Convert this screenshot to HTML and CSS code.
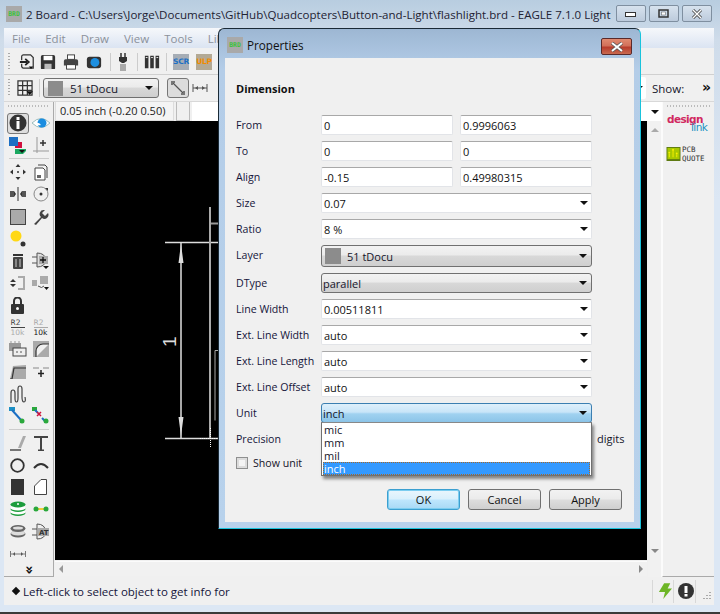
FILE: index.html
```html
<!DOCTYPE html>
<html lang="en">
<head>
<meta charset="utf-8">
<title>EAGLE Properties</title>
<link rel="stylesheet" href="styles.css">
</head>
<body>
<div class="desktop">
  <div class="win">
    <div class="titlebar">
      <span class="brd">BRD</span>
      <span class="title-text">2 Board - C:\Users\Jorge\Documents\GitHub\Quadcopters\Button-and-Light\flashlight.brd - EAGLE 7.1.0 Light</span>
      <div class="caps">
        <span class="cap"><svg width="12" height="8" viewBox="0 0 12 8"><rect x="0.5" y="2.5" width="10" height="4" fill="#fff" stroke="#333"/></svg></span>
        <span class="cap"><svg width="12" height="10" viewBox="0 0 12 10"><rect x="1" y="1" width="9" height="7" fill="none" stroke="#333" stroke-width="1.5"/><rect x="3.5" y="3" width="4" height="3" fill="#fff" stroke="#555" stroke-width=".5"/></svg></span>
        <span class="cap"><svg width="12" height="10" viewBox="0 0 12 10"><path d="M2 1l8 8M10 1l-8 8" stroke="#444" stroke-width="3"/><path d="M2 1l8 8M10 1l-8 8" stroke="#fff" stroke-width="1.4"/></svg></span>
      </div>
    </div>
    <div class="body">
      <div class="menubar">
        <span>File</span><span>Edit</span><span>Draw</span><span>View</span><span>Tools</span><span>Library</span>
      </div>
      <div class="toolbar tb1">
        <i class="grip"></i>
        <svg class="ti" width="16" height="16" viewBox="0 0 18 18"><path d="M5 1h8l3 3v12H5a3 3 0 0 1-2-2v-3M3 7V3a2 2 0 0 1 2-2" fill="none" stroke="#333" stroke-width="1.4"/><path d="M1 9h8M7 5.500l4 3.500-4 3.500" fill="none" stroke="#222" stroke-width="2"/><path d="M11 14h5l-2.500 3z" fill="#111"/></svg>
        <svg class="ti" width="16" height="16" viewBox="0 0 18 18"><path d="M1 3a2 2 0 0 1 2-2h12a2 2 0 0 1 2 2v13a1 1 0 0 1-1 1H2a1 1 0 0 1-1-1z" fill="#333"/><rect x="4" y="2" width="10" height="5" fill="#fff"/><rect x="5" y="11" width="8" height="6" fill="#bbb"/></svg>
        <svg class="ti" width="16" height="16" viewBox="0 0 18 18"><rect x="5" y="1" width="8" height="5" fill="#fff" stroke="#333"/><path d="M1 8a2 2 0 0 1 2-2h12a2 2 0 0 1 2 2v5H1z" fill="#444"/><rect x="4" y="12" width="10" height="5" fill="#fff" stroke="#333"/></svg>
        <svg class="ti" width="16" height="16" viewBox="0 0 18 18"><rect x="1" y="3" width="16" height="13" rx="3" fill="#333"/><circle cx="10" cy="9.500" r="5" fill="#1d8fe0"/></svg>
        <i class="sep s1"></i>
        <svg class="ti plug" width="10" height="18" viewBox="0 0 10 18"><path d="M3 0v4M7 0v4" stroke="#333" stroke-width="1.500"/><path d="M1 4h8v4l-3 2H4L1 8z" fill="#333"/><rect x="2" y="11" width="6" height="7" fill="#aaa"/></svg>
        <i class="sep s2"></i>
        <svg class="ti bars" width="16" height="16" viewBox="0 0 18 16"><path d="M1 1h4v14H1zM7 1h4v14H7zM13 1h4v14h-4z" fill="#333"/><path d="M2 3h2M8 3h2M14 3h2" stroke="#fff"/></svg>
        <i class="sep s3"></i>
        <span class="chip scr">SCR</span>
        <span class="chip ulp">ULP</span>
      </div>
      <div class="toolbar tb2">
        <i class="grip"></i>
        <svg class="ti gridicon" width="16" height="16" viewBox="0 0 17 17"><path d="M1 1h15v15H1zM6 1v15M11 1v15M1 6h15M1 11h15" fill="none" stroke="#333" stroke-width="1.300"/><path d="M10 12h7l-3.500 4z" fill="#111"/></svg>
        <i class="sep s4"></i>
        <div class="combo layer-combo"><i class="swatch"></i><span>51 tDocu</span><b class="arrow"></b></div>
        <span class="pressed"><svg width="16" height="16" viewBox="0 0 16 16"><path d="M2 2l12 12" stroke="#555" stroke-width="1.300"/><path d="M1 1h4v2H3v2H1zM15 15h-4v-2h2v-2h2z" fill="#777"/></svg></span>
        <svg class="ti dimicon" width="16" height="10" viewBox="0 0 16 10"><path d="M1 5h14M1 1v8M15 1v8" stroke="#555"/><path d="M3 5l3-2v4zM13 5l-3-2v4z" fill="#555"/></svg>
        <div class="spacer"></div>
        <div class="show-box"><b class="arrow"></b></div>
        <span class="show">Show:</span>
        <span class="more">»</span>
      </div>
      <div class="main">
        <div class="left">
          <i class="grip-h"></i>
          <div class="tools">
            <span class="tool on"><svg width="18" height="18" viewBox="0 0 18 18"><circle cx="9" cy="9" r="8.500" fill="#333"/><rect x="7.500" y="7" width="3" height="8" fill="#fff"/><rect x="7.500" y="3" width="3" height="3" fill="#fff"/></svg></span>
            <span class="tool"><svg width="18" height="12" viewBox="0 0 18 12"><path d="M0 6q9-9 18 0q-9 9-18 0z" fill="#fff" stroke="#9bb" /><circle cx="10" cy="6" r="4.500" fill="#1a8de0"/><path d="M3 6q4-1 6 2q-4 1-6-2z" fill="#fff"/></svg></span>
            <span class="tool"><svg width="17" height="17" viewBox="0 0 17 17"><rect x="0" y="0" width="9" height="9" fill="#1c6fc4"/><path d="M9 5h4v6H6V9h3z" fill="#d0103c"/><path d="M6 12h11v2l-3 3H6z" fill="#1aa860"/><path d="M10 13h6l-3 3z" fill="#111"/></svg></span>
            <span class="tool"><svg width="16" height="16" viewBox="0 0 16 16"><path d="M4 0v16M0 14h16" stroke="#999"/><path d="M10 3v6M7 6h6" stroke="#333" stroke-width="1.500"/></svg></span>
            <i class="divider"></i>
            <span class="tool"><svg width="16" height="16" viewBox="0 0 16 16"><path d="M8 0l2.500 3h-5zM8 16l-2.500-3h5zM0 8l3-2.500v5zM16 8l-3-2.500v5z" fill="#333"/><circle cx="8" cy="8" r="1" fill="#333"/></svg></span>
            <span class="tool"><svg width="14" height="17" viewBox="0 0 14 17"><path d="M4 1h7l2 2v11" fill="none" stroke="#444"/><path d="M1 4h8l2 2v10H1z" fill="#fff" stroke="#444"/><rect x="3" y="11" width="4" height="3" fill="#666"/></svg></span>
            <span class="tool"><svg width="16" height="14" viewBox="0 0 16 14"><path d="M8 0v14" stroke="#333"/><path d="M0 4h4v6H0zM12 4h4v6h-4z" fill="#555"/><path d="M4 4l2 3-2 3zM12 4l-2 3 2 3z" fill="#333"/></svg></span>
            <span class="tool"><svg width="16" height="16" viewBox="0 0 16 16"><circle cx="8" cy="8" r="7" fill="none" stroke="#888"/><circle cx="8" cy="8" r="1.500" fill="#333"/><path d="M12 2h3v3z" fill="#333"/></svg></span>
            <span class="tool"><svg width="16" height="16" viewBox="0 0 16 16"><rect x=".5" y=".5" width="15" height="15" fill="#aaa" stroke="#444"/></svg></span>
            <span class="tool"><svg width="16" height="16" viewBox="0 0 16 16"><path d="M1 15l7-7a4 4 0 0 1 3-7l1 0-3 3 3 3 3-3a4 4 0 0 1-6 5l-6 7z" fill="#444"/></svg></span>
            <span class="tool"><svg width="18" height="18" viewBox="0 0 18 18"><circle cx="7" cy="6" r="5.500" fill="#ffd814"/><circle cx="14" cy="14" r="2.500" fill="#333"/></svg></span>
            <span class="tool"></span>
            <span class="tool"><svg width="12" height="16" viewBox="0 0 12 16"><rect x="1" y="1" width="10" height="2" fill="#333"/><rect x="1" y="4" width="10" height="12" rx="1" fill="#444"/><path d="M4 6v8M8 6v8" stroke="#ccc"/></svg></span>
            <span class="tool"><svg width="17" height="17" viewBox="0 0 17 17"><path d="M0 5h5M0 11h5" stroke="#555"/><path d="M5 1q8 0 9 7q-1 7-9 7z" fill="#ddd" stroke="#555"/><rect x="7" y="4" width="9" height="8" fill="#aaa"/><path d="M11 5v6M8 8h6" stroke="#111" stroke-width="1.300"/><path d="M11 14h6l-3 3z" fill="#111"/></svg></span>
            <span class="tool"><svg width="16" height="16" viewBox="0 0 16 16"><path d="M3 4l3 3H0zM3 12l3-3H0z" fill="#333"/><path d="M8 2h6v12H8" fill="none" stroke="#aaa" stroke-width="2"/></svg></span>
            <span class="tool"><svg width="17" height="14" viewBox="0 0 17 14"><rect x="0" y="4" width="5" height="6" fill="#aaa"/><rect x="8" y="0" width="8" height="8" fill="#aaa"/><path d="M6 10q4 3 6 0" fill="none" stroke="#555"/><path d="M12 11h5l-2.500 3z" fill="#111"/></svg></span>
            <span class="tool"><svg width="13" height="17" viewBox="0 0 13 17"><path d="M3 8V4a3.500 3.500 0 0 1 7 0v4" fill="none" stroke="#333" stroke-width="2"/><rect y="7" width="13" height="10" rx="1" fill="#333"/><circle cx="6.500" cy="11.500" r="1.500" fill="#fff"/></svg></span>
            <span class="tool"></span>
            <span class="tool rr"><em>R2</em><u>10k</u></span>
            <span class="tool rr alt"><em>R2</em><u>10k</u></span>
            <span class="tool"><svg width="18" height="16" viewBox="0 0 18 16"><rect y="2" width="12" height="8" fill="#999"/><path d="M2 0v2M6 0v2M10 0v2" stroke="#999"/><rect x="4" y="7" width="13" height="8" fill="#eee" stroke="#444"/><path d="M8 10v2M12 10v2" stroke="#555"/></svg></span>
            <span class="tool"><svg width="16" height="16" viewBox="0 0 16 16"><rect width="16" height="16" fill="#aaa"/><path d="M3 16V10a7 7 0 0 1 7-7h6" fill="#f0f0f0" stroke="#333" stroke-width="1.200"/></svg></span>
            <span class="tool"><svg width="16" height="14" viewBox="0 0 16 14"><path d="M0 14l3-13 13-1v14z" fill="#aaa"/><path d="M0 14h2l2-11h12" fill="none" stroke="#333" stroke-width="1.200"/></svg></span>
            <span class="tool"><svg width="16" height="10" viewBox="0 0 16 10"><path d="M0 1h6M10 1h6" stroke="#888"/><path d="M8 3v7M5 6.500h6" stroke="#222" stroke-width="1.500"/></svg></span>
            <span class="tool"><svg width="16" height="18" viewBox="0 0 16 18"><path d="M1 18V8q0-3 2-3t2 3v5q0 4 1.500 4T8 13V4q0-3 2-3t2 3v8q0 5 2 5t1-5" fill="none" stroke="#444" stroke-width="1.200"/></svg></span>
            <span class="tool"></span>
            <span class="tool"><svg width="17" height="17" viewBox="0 0 17 17"><rect y="0" width="6" height="4" fill="#1c8fc4"/><path d="M3 3l9 10" stroke="#1c6fc4" stroke-width="2"/><circle cx="13" cy="14" r="2.500" fill="#2aa83c"/></svg></span>
            <span class="tool"><svg width="17" height="17" viewBox="0 0 17 17"><rect y="0" width="5" height="4" fill="#2aa83c"/><path d="M3 3l3 3M10 11l3 3" stroke="#1c6fc4" stroke-width="2"/><path d="M5 5l4 4M9 5l-4 4" stroke="#d0103c" stroke-width="1.500"/><circle cx="14" cy="14" r="2.500" fill="#2aa83c"/></svg></span>
            <i class="divider"></i>
            <span class="tool"><svg width="16" height="16" viewBox="0 0 16 16"><path d="M8 13L13 1h3l-5 12z" fill="#aaa"/><path d="M0 15h11" stroke="#333" stroke-width="1.300"/></svg></span>
            <span class="tool"><svg width="14" height="15" viewBox="0 0 14 15"><path d="M1 2V1h12v1M7 1v14M4 14.500h6" fill="none" stroke="#444" stroke-width="2"/></svg></span>
            <span class="tool"><svg width="15" height="15" viewBox="0 0 15 15"><circle cx="7.500" cy="7.500" r="6.300" fill="none" stroke="#333" stroke-width="1.800"/></svg></span>
            <span class="tool"><svg width="16" height="8" viewBox="0 0 16 8"><path d="M1 7q7-8 14 0" fill="none" stroke="#333" stroke-width="2"/></svg></span>
            <span class="tool"><svg width="13" height="16" viewBox="0 0 13 16"><rect width="13" height="16" fill="#333"/></svg></span>
            <span class="tool"><svg width="13" height="16" viewBox="0 0 13 16"><path d="M.5 15.500V7L7 .5h5.500v15z" fill="#fff" stroke="#444"/></svg></span>
            <span class="tool"><svg width="16" height="16" viewBox="0 0 16 16"><ellipse cx="8" cy="12" rx="7.500" ry="3" fill="#1c9c3c"/><ellipse cx="8" cy="11" rx="7.500" ry="2.500" fill="#fff"/><ellipse cx="8" cy="8" rx="7.500" ry="3" fill="#1c9c3c"/><ellipse cx="8" cy="7" rx="7.500" ry="2.500" fill="#fff"/><ellipse cx="8" cy="3.500" rx="7.500" ry="3" fill="#1c9c3c"/><circle cx="8" cy="3" r="1" fill="#fff"/></svg></span>
            <span class="tool"><svg width="16" height="6" viewBox="0 0 16 6"><path d="M3 3h10" stroke="#f0c000" stroke-width="1.500"/><circle cx="3" cy="3" r="2.500" fill="#2aa83c"/><circle cx="13" cy="3" r="2.500" fill="#2aa83c"/></svg></span>
            <span class="tool"><svg width="16" height="13" viewBox="0 0 16 13"><ellipse cx="8" cy="9" rx="7.500" ry="3.500" fill="#666"/><ellipse cx="8" cy="8" rx="7" ry="2.500" fill="#ddd"/><ellipse cx="8" cy="3.500" rx="7.500" ry="3.500" fill="#666"/><ellipse cx="8" cy="3" rx="5" ry="1.500" fill="#ddd"/></svg></span>
            <span class="tool"><svg width="17" height="17" viewBox="0 0 17 17"><path d="M0 6h5M0 12h5" stroke="#555"/><path d="M5 1q8 0 9 8q-1 7-9 7z" fill="#eee" stroke="#555"/><rect x="6" y="5" width="11" height="8" fill="#aaa"/><text x="7" y="12" class="svgat">AT</text></svg></span>
            <span class="tool"><svg width="16" height="6" viewBox="0 0 16 6"><path d="M.5 0v6M15.500 0v6M1 3h14" stroke="#777"/><path d="M3 3l2-2v4zM13 3l-2-2v4z" fill="#555"/></svg></span>
            <span class="tool"></span>
          </div>
          <div class="chev">»</div>
        </div>
        <div class="center">
          <div class="coord-row">
            <span class="coord">0.05 inch (-0.20 0.50)</span>
            <span class="coord-small"></span>
            <span class="coord-input"><b class="arrow"></b></span>
          </div>
          <div class="work">
            <div class="canvas-col">
              <div class="canvas">
                <svg class="drawing" viewBox="54 121 592 439" width="592" height="439">
                  <path d="M164 242.500h54M164 438.500h54" stroke="#ddd" stroke-width="1.500"/>
                  <path d="M180 243v195" stroke="#e0e0e0" stroke-width="1.500"/>
                  <path d="M180 244l2.500 19h-5zM180 436l2.500-19h-5z" fill="#ddd"/>
                  <path d="M209 207v231" stroke="#aaa" stroke-width="2"/>
                  <path d="M210 223.500h7" stroke="#999" stroke-width="2"/>
                  <path d="M217 350.500h-3v70" fill="none" stroke="#aaa"/>
                  <path d="M199 438.500h18M209.500 428v20" stroke="#fff" stroke-dasharray="1 1"/>
                  <text x="0" y="0" class="one" transform="translate(175 347) rotate(-90)">1</text>
                </svg>
              </div>
              <div class="hscroll"><i class="tri-l"></i><i class="tri-r"></i></div>
            </div>
            <div class="vscroll"><i class="tri-u"></i><i class="tri-d"></i></div>
          </div>
        </div>
        <div class="right">
          <i class="grip-h"></i>
          <div class="logo"><span class="l1">design</span><span class="l2">link</span></div>
          <div class="quote">
            <svg width="15" height="14" viewBox="0 0 15 15"><rect width="15" height="15" fill="#5e7a12"/><rect x="1" y="1" width="13" height="12" fill="#a8c800"/><path d="M3 11V7M7 11V3M11 11V8" stroke="#f8f000"/><circle cx="3" cy="6" r="1" fill="#f8f000"/><circle cx="7" cy="3" r="1" fill="#f8f000"/><circle cx="11" cy="7" r="1" fill="#f8f000"/></svg>
            <span>PCB<br>QUOTE</span>
          </div>
        </div>
      </div>
      <div class="status">
        <span class="diamond"></span>
        <span class="status-text">Left-click to select object to get info for</span>
        <div class="spacer"></div>
        <i class="stsep"></i>
        <svg class="bolt" width="14" height="16" viewBox="0 0 16 18"><path d="M7 0h7l-3 6h5L6 18l2-8H1z" fill="#6db526"/></svg>
        <i class="stsep"></i>
        <svg class="warn" width="16" height="16" viewBox="0 0 16 16"><circle cx="8" cy="8" r="8" fill="#333"/><rect x="6.500" y="3" width="3" height="7" fill="#fff"/><rect x="6.500" y="11" width="3" height="2.500" fill="#fff"/></svg>
        <i class="stsep"></i>
        <svg class="gripper" width="10" height="10" viewBox="0 0 10 10"><path d="M7 1h2v1H7zM4 4h2v1H4zM7 4h2v1H7zM1 7h2v1H1zM4 7h2v1H4zM7 7h2v1H7z" fill="#aaa"/></svg>
      </div>
    </div>
  </div>

  <div class="dialog">
    <div class="dlg-title">
      <span class="brd small">BRD</span>
      <span class="dlg-name">Properties</span>
      <span class="close"><svg width="16" height="10" viewBox="0 0 16 10"><path d="M3 1l10 8M13 1L3 9" stroke="#555" stroke-width="3.500"/><path d="M3 1l10 8M13 1L3 9" stroke="#fff" stroke-width="2"/></svg></span>
    </div>
    <div class="client">
      <h1 class="heading">Dimension</h1>
      <div class="form">
        <label>From</label><div class="pair"><span class="input">0</span><span class="input">0.9996063</span></div><span></span>
        <label>To</label><div class="pair"><span class="input">0</span><span class="input">0</span></div><span></span>
        <label>Align</label><div class="pair"><span class="input">-0.15</span><span class="input">0.49980315</span></div><span></span>
        <label>Size</label><span class="input sel">0.07<b class="arrow"></b></span><span></span>
        <label>Ratio</label><span class="input sel">8 %<b class="arrow"></b></span><span></span>
        <label>Layer</label><div class="combo big"><i class="swatch"></i><span>51 tDocu</span><b class="arrow"></b></div><span></span>
        <label>DType</label><div class="combo flat"><span>parallel</span><b class="arrow"></b></div><span></span>
        <label>Line Width</label><span class="input sel">0.00511811<b class="arrow"></b></span><span></span>
        <label>Ext. Line Width</label><span class="input sel">auto<b class="arrow"></b></span><span></span>
        <label>Ext. Line Length</label><span class="input sel">auto<b class="arrow"></b></span><span></span>
        <label>Ext. Line Offset</label><span class="input sel">auto<b class="arrow"></b></span><span></span>
        <label>Unit</label><div class="combo active"><span>inch</span><b class="arrow"></b></div><span></span>
        <label>Precision</label><span class="input"></span><span class="digits">digits</span>
      </div>
      <div class="showunit"><i class="check"></i><span>Show unit</span></div>
      <div class="buttons">
        <span class="btn default">OK</span>
        <span class="btn">Cancel</span>
        <span class="btn">Apply</span>
      </div>
      <ul class="popup">
        <li>mic</li><li>mm</li><li>mil</li><li class="cur">inch</li>
      </ul>
    </div>
  </div>
</div>
</body>
</html>
```
FILE: styles.css
```css
* { box-sizing: border-box; }
html, body { margin: 0; padding: 0; }
body { width: 720px; height: 614px; overflow: hidden; font: 12px "Open Sans", "Noto Sans", sans-serif; color: #15152a; }
.desktop { position: relative; width: 720px; height: 614px; background: #3a3a3a; }
.win { width: 720px; height: 612px; background: linear-gradient(#b8cde0 0, #cfdcea 40px, #dce7f4 200px); display: flex; flex-direction: column; }

.titlebar { height: 28px; display: flex; align-items: center; padding-left: 6px; }
.brd { width: 16px; height: 16px; background: #a9a9a9; color: #3fc13f; font: bold 6.500px/16px "DejaVu Sans Mono", monospace; text-align: center; flex: none; }
.title-text { margin-left: 4px; font-size: 11.550px; color: #223; white-space: nowrap; }
.caps { margin-left: auto; margin-right: 8px; display: flex; gap: 3px; margin-top: -1px; }
.cap { width: 30px; height: 17px; border: 1px solid #7f8fa0; border-radius: 2px; background: linear-gradient(#d7e2ee, #bccbdc); display: flex; align-items: center; justify-content: center; }

.body { width: 710px; margin-left: 4px; height: 577px; background: #f0f0f0; display: flex; flex-direction: column; }
.menubar { height: 20px; flex: none; display: flex; gap: 15px; padding-left: 8px; align-items: center; font-size: 11.500px; color: #8b919b; background: linear-gradient(#f6f8fb, #dbe4f2); white-space: nowrap; overflow: hidden; }
.toolbar { flex: none; display: flex; align-items: center; position: relative; }
.tb1 { height: 27px; border-top: 2px solid #f0f0f0; border-bottom: 1px solid #d0d0d0; }
.tb2 { height: 27px; border-bottom: 1px solid #d8d8d8; }
.grip { width: 2px; height: 18px; margin-left: 4px; flex: none; background: repeating-linear-gradient(#aaa 0 1px, transparent 1px 3px); }
.ti { flex: none; }
.tb1 .ti { margin-left: 7px; }
.tb1 .ti:nth-of-type(1) { margin-left: 9px; }
.tb1 .ti:nth-of-type(2) { margin-left: 5px; }
.sep { width: 1px; height: 18px; background: #ccc; flex: none; }
.s1 { margin-left: 8px; }
.tb1 .plug { margin-left: 7px; }
.s2 { margin-left: 9px; }
.tb1 .bars { margin-left: 6px; }
.s3 { margin-left: 6px; }
.chip { width: 16px; height: 16px; background: #a6adb5; font: bold 7.500px/16px "DejaVu Sans", sans-serif; text-align: center; flex: none; letter-spacing: -.3px; }
.scr { color: #1c6fc4; margin-left: 6px; }
.ulp { background: #b3a994; color: #f08c00; margin-left: 7px; }

.gridicon { margin-left: 7px; }
.s4 { margin-left: 6px; }
.arrow { position: absolute; right: 5px; top: 50%; margin-top: -2px; width: 0; height: 0; border: 4px solid transparent; border-top: 4px solid #111; border-bottom: 0; }
.combo { position: relative; border: 1px solid #707070; border-radius: 3px; background: linear-gradient(#f2f2f2 0, #ebebeb 45%, #d8d8d8 50%, #cfcfcf 100%); display: flex; align-items: center; font-size: 11.500px; white-space: nowrap; }
.layer-combo { width: 116px; height: 20px; margin-left: 3px; padding-left: 4px; }
.swatch { width: 15px; height: 15px; background: #8c8c8c; flex: none; margin-right: 7px; }
.pressed { width: 22px; height: 20px; border: 1px solid #777; border-radius: 3px; background: #dcdcdc; margin-left: 8px; display: flex; align-items: center; justify-content: center; flex: none; }
.dimicon { margin-left: 3px; }
.spacer { flex: 1; }
.show-box { position: relative; width: 30px; height: 22px; background: #fff; border-radius: 0 2px 2px 0; margin-right: 3px; }
.show-box .arrow { right: 3px; }
.show { width: 50px; font-size: 11.500px; margin-left: 3px; }
.more { width: 12px; font: bold 14px/14px "DejaVu Sans", sans-serif; color: #111; margin-top: -3px; }

.main { flex: 1; display: flex; min-height: 0; }
.left { width: 50px; flex: none; border-right: 1px solid #aaa; border-bottom: 1px solid #aaa; background: #f0f0f0; position: relative; }
.grip-h { display: block; height: 2px; margin: 3px 4px 0; background: repeating-linear-gradient(90deg, #bbb 0 1px, transparent 1px 3px); }
.tools { display: grid; grid-template-columns: 23px 23px; grid-template-rows: repeat(2, 22.150px) 5px repeat(12, 22.150px) 5px; grid-auto-rows: 22.150px; padding: 5px 0 0 2px; justify-items: center; align-items: center; }
.tool { display: flex; width: 22px; height: 22px; align-items: center; justify-content: center; }
.tool.on { border: 1px solid #777; border-radius: 3px; background: #dedede; height: 21px; }
.divider { grid-column: 1 / 3; width: 40px; height: 1px; background: #ccc; }
.rr { flex-direction: column; font: 7.500px/9px "DejaVu Sans", sans-serif; color: #444; }
.rr em { font-style: normal; border-bottom: 1px solid #444; width: 14px; text-align: left; }
.rr u { text-decoration: none; color: #aaa; }
.rr.alt em { color: #aaa; border-color: #aaa; }
.rr.alt u { color: #111; }
.chev { position: absolute; left: 21px; bottom: -2px; font: bold 14px/16px "DejaVu Sans", sans-serif; transform: rotate(90deg); color: #111; }
.svgat { font: bold 7px "DejaVu Sans", sans-serif; fill: #333; }

.center { flex: 1; display: flex; flex-direction: column; min-width: 0; }
.coord-row { height: 19px; display: flex; flex: none; align-items: stretch; }
.coord { width: 119px; border: 1px solid #ddd; border-top: 0; padding-left: 4px; margin-left: 1px; font-size: 11px; line-height: 18px; color: #222; white-space: nowrap; background: #f4f4f4; }
.coord-small { width: 14px; margin-left: 2px; border: 1px solid #bbb; border-top: 0; background: #f0f0f0; }
.coord-input { position: relative; flex: 1; background: #fff; margin-left: 2px; }
.coord-input .arrow { right: 3px; }
.work { flex: 1; display: flex; min-height: 0; }
.canvas-col { width: 593px; display: flex; flex-direction: column; }
.canvas { height: 439px; background: #000; flex: none; margin-left: 1px; width: 592px; }
.drawing { display: block; }
.one { font: normal 19px "Liberation Sans", sans-serif; fill: #ddd; }
.hscroll { position: relative; height: 15px; margin-top: 1px; background: #f1f1f1; border-top: 1px solid #fbfbfb; margin-left: 1px; }
.tri-l, .tri-r, .tri-u, .tri-d { position: absolute; width: 0; height: 0; border: 4px solid transparent; }
.tri-l { left: 4px; top: 3px; border-right-color: #999; border-left: 0; }
.tri-r { right: 4px; top: 3px; border-left-color: #888; border-right: 0; }
.vscroll { position: relative; width: 16px; margin-left: 1px; background: #f1f1f1; border-right: 1px solid #fbfbfb; }
.tri-u { left: 3px; top: 7px; border-bottom-color: #aaa; border-top: 0; }
.tri-d { left: 3px; top: 428px; border-top-color: #888; border-bottom: 0; }

.right { width: 52px; flex: none; border-left: 1px solid #fbfbfb; border-bottom: 1px solid #aaa; }
.logo { display: flex; flex-direction: column; align-items: flex-start; margin: 8px 0 0 4px; font: bold 10.500px/9px "DejaVu Sans", sans-serif; letter-spacing: -.6px; height: 24px; }
.l1 { color: #d02860; }
.l2 { color: #2090c0; margin-left: 24px; margin-top: -1px; font-weight: normal; }
.quote { display: flex; gap: 1px; margin: 6px 0 0 3px; font: 7.500px/9px "DejaVu Sans Mono", monospace; color: #333; align-items: center; }

.status { height: 28px; flex: none; display: flex; align-items: center; padding-left: 9px; background: #f0f0f0; }
.diamond { width: 6px; height: 6px; background: #111; transform: rotate(45deg); flex: none; margin-top: -1px; }
.status-text { margin-left: 4px; font-size: 11.500px; color: #14143a; white-space: nowrap; }
.stsep { width: 1px; height: 23px; background: #d8d8d8; flex: none; }
.bolt { margin: 0 1px 0 5px; flex: none; }
.warn { margin: 0 1px 0 4px; flex: none; }
.gripper { margin: 10px 2px 0 6px; flex: none; }

.dialog { position: absolute; left: 218px; top: 28px; width: 423px; height: 501px; border: 1px solid #1a2a36; border-right-color: #19c3dc; border-bottom-color: #19c3dc; border-radius: 6px 6px 0 0; background: linear-gradient(#9db7d3 0, #b4cde8 40px, #b8d2ec 100%); padding: 0 6px 6px; display: flex; flex-direction: column; }
.dlg-title { height: 29px; flex: none; display: flex; align-items: center; position: relative; padding: 2px 0 0 2px; }
.dlg-name { margin-left: 4px; font-size: 11.700px; color: #111; }
.close { position: absolute; right: 2px; top: 9px; width: 31px; height: 17px; border: 1px solid #5a2a2a; border-radius: 2px; background: linear-gradient(#e08a70 0, #d2705a 45%, #b83c2c 55%, #c86a50 100%); display: flex; align-items: center; justify-content: center; }
.client { flex: 1; background: #f0f0f0; padding: 0 0 0 11px; position: relative; }
.heading { margin: 0; height: 57px; padding-top: 23px; font-size: 11px; font-weight: bold; line-height: 16px; color: #111; }
.form { display: grid; grid-template-columns: 85px 271px 1fr; grid-template-rows: repeat(5, 20px) 22px; row-gap: 6px; grid-auto-rows: 20px; }
.form label { font-size: 10.600px; line-height: 20px; color: #15153a; white-space: nowrap; }
.pair { display: grid; grid-template-columns: 132px 132px; column-gap: 7px; }
.input { position: relative; display: block; height: 20px; padding-left: 2px; background: #fff; border: 1px solid #e2e4e8; border-top-color: #a8a8a8; border-radius: 2px; font-size: 11px; line-height: 19px; color: #111; }
.input.sel .arrow { right: 3px; }
.combo.big { height: 22px; padding-left: 3px; }
.big .swatch { margin-right: 6px; width: 16px; height: 16px; }
.combo.flat { height: 20px; padding-left: 1px; }
.combo.active { height: 20px; padding-left: 1px; border-color: #3c7fb1; background: linear-gradient(#dff0fb 0, #c8e5f8 45%, #a0d2f0 55%, #8cc4e8 100%); font-size: 11px; }
.big span, .flat span { font-size: 11px; }
.big .arrow, .flat .arrow, .active .arrow { right: 4px; }
.digits { padding-left: 5px; font-size: 11px; line-height: 20px; }
.showunit { display: flex; align-items: center; gap: 5px; margin-top: 8px; height: 12px; font-size: 10.600px; }
.check { width: 12px; height: 12px; border: 1px solid #8e8f8f; background: #f4f4f4; box-shadow: inset 0 0 0 2px #dcdcdc; flex: none; }
.buttons { display: flex; justify-content: flex-end; gap: 8px; margin: 20px 12px 0 0; }
.btn { width: 73px; height: 21px; border: 1px solid #707070; border-radius: 3px; background: linear-gradient(#f2f2f2 0, #ebebeb 48%, #ddd 52%, #cfcfcf 100%); text-align: center; font-size: 11px; line-height: 19px; color: #111; }
.btn.default { border-color: #3c9fd0; background: linear-gradient(#eaf6fd, #d9f0fc 48%, #bee6fd 52%, #a7d9f5); box-shadow: 0 0 0 1px #7ccdf0 inset; }
.popup { position: absolute; left: 96px; top: 364px; width: 271px; height: 54px; margin: 0; padding: 0 1px; list-style: none; background: #fff; border: 1px solid #707070; border-top-color: #888; box-shadow: 2px 3px 3px rgba(0,0,0,.45); font-size: 11px; line-height: 13px; }
.popup li { height: 13px; padding-left: 1px; }
.popup .cur { background: #3399ff; color: #fff; outline: 1px dotted #a5692a; outline-offset: -1px; }
```
